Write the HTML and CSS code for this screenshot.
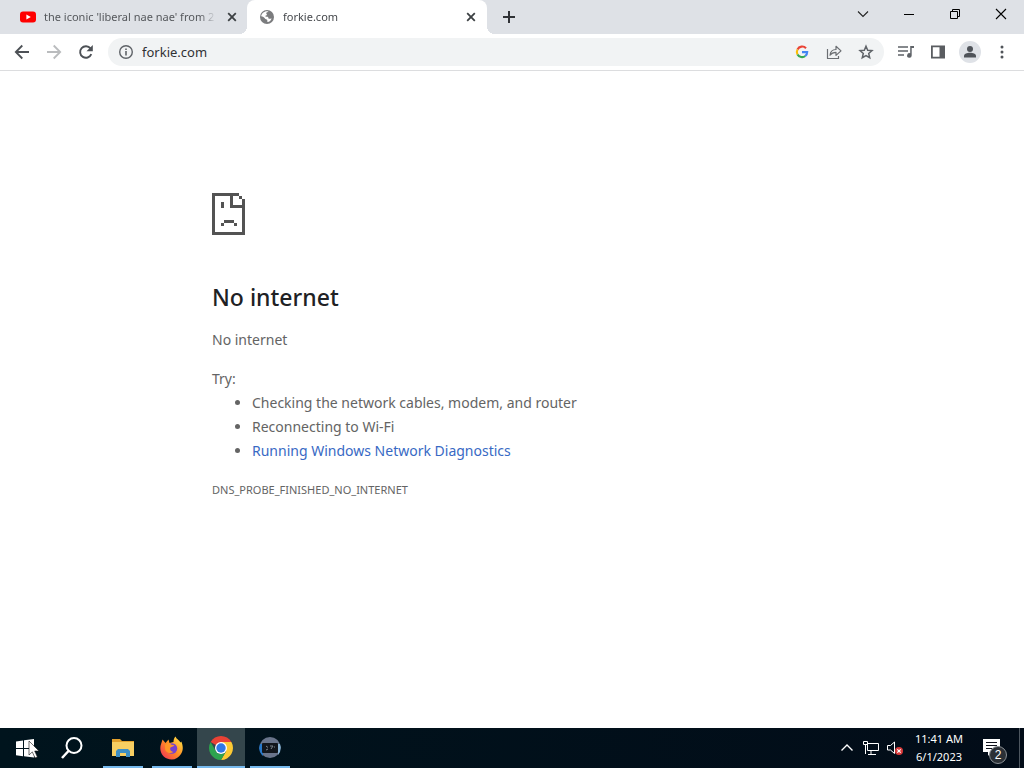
FILE: index.html
```
<!DOCTYPE html>
<html lang="en">
<head>
    <meta charset="UTF-8">
    <meta name="viewport" content="width=device-width, initial-scale=1.0">
    <title>forkie.com</title>
    <link rel="stylesheet" href="styles.css">
</head>
<body>
    <header class="browser">
        <div class="tab-strip">
            <div class="tab">
                <svg class="icon" viewBox="0 0 16 16"><rect y="2.500" width="16" height="11" rx="3" fill="#f00"/><path d="M6.400 5.400v5.200L10.800 8z" fill="#fff"/></svg>
                <span class="tab-title">the iconic 'liberal nae nae' from 2</span>
                <button class="tab-close" aria-label="Close tab"><svg class="icon" viewBox="0 0 16 16"><path d="M4.200 4.200l7.600 7.600M11.800 4.200l-7.600 7.600" stroke="#3c4043" stroke-width="1.800"/></svg></button>
            </div>
            <div class="tab active">
                <svg class="icon" viewBox="0 0 16 16"><circle cx="8" cy="8" r="7" fill="#7b7c7e"/><path d="M9.500 2.300c-.5 1-1.900.8-2.300 1.700-.3.800.900.900.700 1.700-.2.900-1.500.5-1.700 1.400 0 .9 1.500.3 2.500.7 1 .5.300 1.800 1.300 2 .9.200 1.200-.3 2.600-.2-.6 2-2 3.300-4.200 3.500-.2-1.100.3-2-.7-2.600-.9-.5-1.700-.2-1.900-1.200C5.500 8.300 3.600 7.400 2.200 7.200 2.500 4.300 5.500 1.500 9.500 2.300z" fill="#fff"/></svg>
                <span class="tab-title">forkie.com</span>
                <button class="tab-close" aria-label="Close tab"><svg class="icon" viewBox="0 0 16 16"><path d="M4.200 4.200l7.600 7.600M11.800 4.200l-7.600 7.600" stroke="#3c4043" stroke-width="1.800"/></svg></button>
            </div>
            <button class="new-tab" aria-label="New tab"><svg class="icon" viewBox="0 0 16 16"><path d="M8 2v12M2 8h12" stroke="#303236" stroke-width="2"/></svg></button>
            <div class="window-controls">
                <button aria-label="Search tabs"><svg class="icon" viewBox="0 0 16 16"><path d="M3 5.500l5 5 5-5" fill="none" stroke="#222" stroke-width="1.100"/></svg></button>
                <button aria-label="Minimize"><svg class="icon" viewBox="0 0 16 16"><path d="M3 8.500h10" stroke="#000"/></svg></button>
                <button aria-label="Restore"><svg class="icon" viewBox="0 0 16 16"><path d="M3.500 5.500h7v7h-7zM5.500 5V3.500h7v7H11" fill="none" stroke="#000"/></svg></button>
                <button aria-label="Close"><svg class="icon" viewBox="0 0 16 16"><path d="M3 3l10 10M13 3L3 13" stroke="#000" stroke-width="1.100"/></svg></button>
            </div>
        </div>

        <div class="toolbar">
            <div class="nav-buttons">
                <button aria-label="Back"><svg class="icon" viewBox="0 0 16 16"><path d="M15 8H2M8.300 1.500L1.800 8l6.500 6.500" fill="none" stroke="#4d5156" stroke-width="1.800"/></svg></button>
                <button aria-label="Forward" disabled><svg class="icon" viewBox="0 0 16 16"><path d="M1 8h13M7.700 1.500L14.200 8l-6.500 6.500" fill="none" stroke="#babcbe" stroke-width="1.800"/></svg></button>
                <button aria-label="Reload"><svg class="icon" viewBox="0 0 16 16"><path d="M13.300 10.200A5.800 5.800 0 1 1 12.500 4.400" fill="none" stroke="#4d5156" stroke-width="1.900"/><path d="M14.800 1v6.300H8.500z" fill="#4d5156"/></svg></button>
            </div>
            <div class="address-bar">
                <svg class="icon" viewBox="0 0 16 16"><circle cx="8" cy="8" r="6.300" fill="none" stroke="#5f6368" stroke-width="1.400"/><path d="M7.200 7h1.600v4.500H7.200zM7.200 4.400h1.600V6H7.200z" fill="#5f6368"/></svg>
                <input class="address" type="text" value="forkie.com" aria-label="Address">
                <button aria-label="Search with Google"><svg class="icon" viewBox="0 0 16 16"><g fill="none" stroke-width="2.100"><path d="M12 4.200A5.200 5.200 0 0 0 3.500 5.500" stroke="#ea4335"/><path d="M3.500 5.500a5.200 5.200 0 0 0 0 5" stroke="#fbbc05"/><path d="M3.500 10.500a5.200 5.200 0 0 0 7.800 1.500" stroke="#34a853"/><path d="M11.300 12c1.200-1 1.900-2.300 1.900-3.900H8" stroke="#4285f4"/></g></svg></button>
                <button aria-label="Share"><svg class="icon" viewBox="0 0 16 16"><path d="M1.500 5v9.500h11V12M4 11.200c.4-4 2.400-5.600 6-5.700V2.300l5 4.600-5 4.500V8.300c-3 0-4.600.9-6 2.900z" fill="none" stroke="#6b6e72" stroke-width="1.200" stroke-linejoin="round"/></svg></button>
                <button aria-label="Bookmark this tab"><svg class="icon" viewBox="0 0 16 16"><path d="M8 2.200l1.700 4 4.300.4-3.300 2.900 1 4.200L8 11.500l-3.700 2.200 1-4.200L2 6.600l4.300-.4z" fill="none" stroke="#5f6368" stroke-width="1.500"/></svg></button>
            </div>
            <div class="actions">
                <button aria-label="Media controls"><svg class="icon" viewBox="0 0 16 16"><path d="M0 3h10M0 7h10M0 11h6" stroke="#5f6368" stroke-width="1.500"/><path d="M16 2h-3.800v7.300a2.300 2.300 0 1 0 1.500 2.200V4H16z" fill="#5f6368"/></svg></button>
                <button aria-label="Side panel"><svg class="icon" viewBox="0 0 16 16"><path d="M1 1.500h14v13H1zM2.800 3.300v9.400h6.700V3.300z" fill="#5a5d61" fill-rule="evenodd"/></svg></button>
                <button aria-label="Profile"><svg class="avatar" viewBox="0 0 22 22"><circle cx="11" cy="11" r="11" fill="#dfe2e7"/><circle cx="11" cy="8" r="3" fill="#50545a"/><path d="M5 16.500V15c0-2.200 3-3.300 6-3.300s6 1.100 6 3.300v1.500z" fill="#50545a"/></svg></button>
                <button aria-label="Menu"><svg class="icon" viewBox="0 0 16 16"><g fill="#505459"><circle cx="8" cy="3" r="1.500"/><circle cx="8" cy="8" r="1.500"/><circle cx="8" cy="13" r="1.500"/></g></svg></button>
            </div>
        </div>
    </header>

    <main class="page">
        <div class="error">
            <svg class="sad-page" viewBox="0 0 33 42" shape-rendering="crispEdges" fill="#535353">
                <path d="M0 0h27v3H3v36h27V6h3v36H0z"/>
                <path d="M18 3h3v9h9v3H18zM27 3h3v3h-3z"/>
                <path d="M9 9h3v6H9zM12 27h10v3H12zM9 30h3v3H9zM22 30h3v3h-3z"/>
            </svg>
            <h1>No internet</h1>
            <p>No internet</p>
            <div class="suggestions">
                <p>Try:</p>
                <ul>
                    <li>Checking the network cables, modem, and router</li>
                    <li>Reconnecting to Wi-Fi</li>
                    <li><a href="#">Running Windows Network Diagnostics</a></li>
                </ul>
            </div>
            <div class="error-code">DNS_PROBE_FINISHED_NO_INTERNET</div>
        </div>
    </main>

    <footer class="taskbar">
        <button class="task" aria-label="Start">
            <svg class="task-icon" viewBox="0 0 24 24"><path d="M4 5.500l7-1V12H4zM12 4.300L22 3v9H12zM4 13h7v7.300l-7-1zM12 13h10v8.500l-10-1.200z" fill="#fff"/></svg>
        </button>
        <button class="task" aria-label="Search">
            <svg class="task-icon" viewBox="0 0 24 24"><circle cx="14" cy="9.500" r="7.500" fill="none" stroke="#fff" stroke-width="2"/><path d="M8.500 15L2 22" stroke="#fff" stroke-width="2.500"/></svg>
        </button>
        <div class="running">
            <button class="task open" aria-label="File Explorer">
                <svg class="task-icon" viewBox="0 0 24 24"><path d="M1 3h8l2 2h12v4H1z" fill="#e3a12c"/><path d="M1 6h22v14H1z" fill="#f8cf62"/><path d="M5 21v-6l2-2h10l2 2v6h-4v-4H9v4z" fill="#3e8fc4"/></svg>
            </button>
            <button class="task open" aria-label="Firefox">
                <svg class="task-icon" viewBox="0 0 24 24"><defs><linearGradient id="fox" x1="1" y1="0" x2="0" y2="1"><stop offset="0" stop-color="#fff04a"/><stop offset=".5" stop-color="#ff8a25"/><stop offset="1" stop-color="#f0265c"/></linearGradient></defs><path d="M2.500 3.500l3 3.500 3-3.500 1 3.500 4-1c0-2.500.8-4.500 2-5.500.7 2.600 4 3.600 5 6l.8-1c1.500 3.500 2.500 8-.3 12.500C18 23 12.500 25 7 22.500 1.500 20-.5 14.500.6 9.500z" fill="url(#fox)"/><circle cx="12" cy="12.500" r="5.200" fill="#7541d0"/><path d="M5 9c2-2.500 5-2 6.500-.2l3 .4c-.5 1.200-3 1.300-4 2.300-1 1.500 0 4 3 4.500-3 2-6.500 1-8-1.500C5 12.800 5 10.500 5 9z" fill="#ff9526"/></svg>
            </button>
            <button class="task open current" aria-label="Google Chrome">
                <svg class="task-icon" viewBox="0 0 24 24"><path d="M12 12L1.610 6A12 12 0 0 1 22.390 6z" fill="#e94235"/><path d="M12 6h10.390A12 12 0 0 1 12 24l5.200-9z" fill="#fcc934"/><path d="M12 24A12 12 0 0 1 1.610 6L6.800 15a6 6 0 0 0 10.400 0z" fill="#2da44e"/><circle cx="12" cy="12" r="6" fill="#fff"/><circle cx="12" cy="12" r="4.700" fill="#3078e5"/></svg>
            </button>
            <button class="task open" aria-label="Terminal">
                <svg class="task-icon" viewBox="0 0 24 24"><circle cx="12" cy="11.500" r="10.500" fill="#69748b"/><path d="M2 8a11 11 0 0 0 3 12V8z" fill="#2878c8"/><path d="M20 8v11a11 11 0 0 0 2-11z" fill="#8bb6d8"/><rect x="4" y="7" width="16" height="10" rx="1" fill="#12161c"/><path d="M8 10l2 1.500M8 14l2-1M12 10h3l-2 3M16 11h1" stroke="#7c848c" fill="none"/></svg>
            </button>
        </div>

        <div class="tray">
            <button aria-label="Show hidden icons"><svg class="icon" viewBox="0 0 16 16"><path d="M2.500 10.500L8 5l5.500 5.500" fill="none" stroke="#fff" stroke-width="1.400"/></svg></button>
            <button aria-label="Network"><svg class="icon" viewBox="0 0 16 16"><path d="M4.500 3.500h11v7h-11zM8 11v3M5 14.500h8M.5 1.500h4v3h-4zM2.500 5v9" fill="none" stroke="#fff"/></svg></button>
            <button aria-label="Volume muted"><svg class="icon" viewBox="0 0 16 16"><path d="M.5 5.500h3L7.500 2v11.500l-4-3.500h-3z" fill="none" stroke="#fff"/><circle cx="12" cy="11" r="4" fill="#d83a3a"/><path d="M10.300 9.300l3.400 3.400M13.700 9.300l-3.400 3.400" stroke="#fff" stroke-width="1.200"/></svg></button>
        </div>
        <div class="clock">
            <span>11:41 AM</span>
            <span>6/1/2023</span>
        </div>
        <button class="notifications" aria-label="Notifications">
            <svg class="task-icon" viewBox="0 0 24 24"><path d="M2 3h17v13h-9l-3 4v-4H2z" fill="#fff"/><path d="M5 6.500h11M5 9.500h11M5 12.500h6" stroke="#10131d"/></svg>
            <span class="badge">2</span>
        </button>
        <div class="show-desktop"></div>
    </footer>

    <!-- mouse pointer -->
    <svg class="cursor" viewBox="0 0 12 19"><path d="M1 1v14l3.300-3.100L7 18l2.400-1-2.700-6H11z" fill="#fff" stroke="#111" stroke-width=".6"/></svg>
</body>
</html>
```
FILE: styles.css
```
* {
    box-sizing: border-box;
}
body {
    display: flex;
    flex-direction: column;
    min-height: 100vh;
    margin: 0;
    background: #fff;
    font-family: "Noto Sans", "Open Sans", sans-serif;
}
button {
    display: flex;
    align-items: center;
    justify-content: center;
    padding: 0;
    border: 0;
    background: none;
}
.icon {
    display: block;
    flex: none;
    width: 16px;
    height: 16px;
}

/* Tabs */
.tab-strip {
    display: flex;
    height: 34px;
    padding-left: 8px;
    background: #dee1e6;
}
.tab {
    display: flex;
    align-items: center;
    gap: 8px;
    flex: 0 1 240px;
    min-width: 0;
    padding: 0 8px 0 12px;
    font-size: 11px;
    line-height: 16px;
    color: #55585c;
}
.tab.active {
    position: relative;
    margin-left: -1px;
    border-radius: 8px 8px 0 0;
    background: #fff;
    color: #45484c;
}
.tab.active::before,
.tab.active::after {
    content: "";
    position: absolute;
    bottom: 0;
    width: 8px;
    height: 8px;
}
.tab.active::before {
    right: 100%;
    background: radial-gradient(circle at 0 0, #dee1e6 8px, #fff 8px);
}
.tab.active::after {
    left: 100%;
    background: radial-gradient(circle at 100% 0, #dee1e6 8px, #fff 8px);
}
.tab-title {
    flex: 1;
    overflow: hidden;
    white-space: nowrap;
    -webkit-mask-image: linear-gradient(to left, transparent, #000 16px);
    mask-image: linear-gradient(to left, transparent, #000 16px);
}
.new-tab {
    width: 28px;
    margin-left: 8px;
}
.window-controls {
    display: flex;
    height: 28px;
    margin-left: auto;
}
.window-controls button {
    width: 46px;
}

/* Toolbar */
.toolbar {
    display: flex;
    align-items: center;
    gap: 8px;
    height: 37px;
    padding: 0 8px;
    border-bottom: 1px solid #dcdddf;
}
.toolbar button {
    width: 28px;
    height: 28px;
}
.nav-buttons {
    display: flex;
    gap: 4px;
}
.address-bar {
    display: flex;
    align-items: center;
    gap: 4px;
    flex: 1;
    height: 28px;
    padding: 0 4px 0 10px;
    border-radius: 14px;
    background: #f1f3f4;
}
.address {
    flex: 1;
    min-width: 0;
    padding: 0 4px;
    border: 0;
    outline: 0;
    background: none;
    font: inherit;
    font-size: 13px;
    color: #303134;
}
.actions {
    display: flex;
    align-items: center;
    gap: 4px;
}
.avatar {
    display: block;
    width: 22px;
    height: 22px;
}

/* Error page */
.page {
    flex: 1;
    color: #646464;
}
.error {
    max-width: 600px;
    margin: 0 auto;
    padding-top: 122px;
    font-size: 14px;
    line-height: 24px;
}
.sad-page {
    display: block;
    width: 33px;
    height: 42px;
}
.error h1 {
    margin: 47px 0 16px;
    font-size: 23px;
    font-weight: 500;
    line-height: 30px;
    color: #202124;
}
.error p {
    margin: 0;
}
.suggestions {
    margin-top: 15px;
}
.error ul {
    margin: 0;
    padding-left: 40px;
}
.error a {
    color: #3869c4;
    text-decoration: none;
}
.error-code {
    margin-top: 15px;
    font-size: 11px;
}

/* Taskbar */
.taskbar {
    display: flex;
    height: 40px;
    background: linear-gradient(to right, #00141d, #020c18);
    color: #fff;
}
.task {
    width: 48px;
    height: 40px;
}
.task-icon {
    display: block;
    width: 24px;
    height: 24px;
}
.running {
    display: flex;
    gap: 1px;
    margin-left: 3px;
}
.open {
    background: linear-gradient(#76b9ed, #76b9ed) center bottom / 40px 2px no-repeat;
}
.open.current {
    background-color: #34464c;
    background-size: 48px 2px;
}
.tray {
    display: flex;
    margin-left: auto;
}
.tray button {
    width: 24px;
}
.clock {
    display: flex;
    flex-direction: column;
    justify-content: center;
    width: 64px;
    font-size: 11px;
    line-height: 18px;
    text-align: center;
}
.notifications {
    position: relative;
    width: 48px;
    padding-right: 4px;
    color: #fff;
}
.badge {
    position: absolute;
    right: 12px;
    bottom: 4px;
    width: 18px;
    height: 18px;
    border: 1px solid #8b9095;
    border-radius: 50%;
    background: #2b3036;
    font-size: 12px;
    line-height: 16px;
    text-align: center;
}
.show-desktop {
    width: 5px;
    border-left: 1px solid #4d565f;
}
.cursor {
    position: fixed;
    bottom: 9px;
    left: 28px;
    width: 12px;
    height: 19px;
}
```
